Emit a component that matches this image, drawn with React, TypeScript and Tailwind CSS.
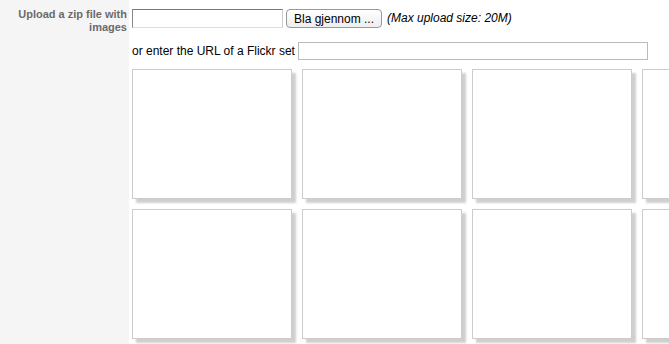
import React from 'react';

const thumbs = Array.from({ length: 8 });

export default function App() {
  return (
    <div className="flex w-[669px] h-[344px] overflow-hidden bg-white font-['Liberation_Sans',Arial,sans-serif]">
      {/* Label column */}
      <div className="w-[129px] shrink-0 bg-[#f5f5f5] pt-[8px] pr-[2px] text-right">
        <label className="block text-[11px] leading-[13px] font-bold text-[#6b6b6b]">
          Upload a zip file with images
        </label>
      </div>

      {/* Form column */}
      <div className="flex flex-col pl-[3px] pt-[8px] min-w-0">
        <div className="flex items-center h-[20px]">
          <div className="w-[151px] h-[19px] bg-white border border-t-[#777] border-l-[#888] border-b-[#ddd] border-r-[#ccc]" />
          <button className="ml-[3px] mt-[1px] w-[96px] h-[19px] rounded-[4px] border border-[#999] bg-gradient-to-b from-white to-[#eee] text-[12px] leading-none text-black">
            Bla gjennom ...
          </button>
          <span className="ml-[5px] text-[12px] italic text-black whitespace-nowrap">(Max upload size: 20M)</span>
        </div>

        <div className="flex items-center mt-[14px] h-[18px]">
          <span className="w-[162px] text-[12px] text-black whitespace-nowrap">or enter the URL of a Flickr set</span>
          <input
            type="text"
            className="ml-[4px] w-[350px] h-[18px] border border-[#bbb] bg-white outline-none"
          />
        </div>

        <div className="grid grid-cols-[repeat(4,160px)] gap-[10px] mt-[9px]">
          {thumbs.map((_, i) => (
            <div
              key={i}
              className="w-[160px] h-[130px] bg-white border border-[#ccc] shadow-[4px_4px_2px_#cfcfcf]"
            />
          ))}
        </div>
      </div>
    </div>
  );
}
